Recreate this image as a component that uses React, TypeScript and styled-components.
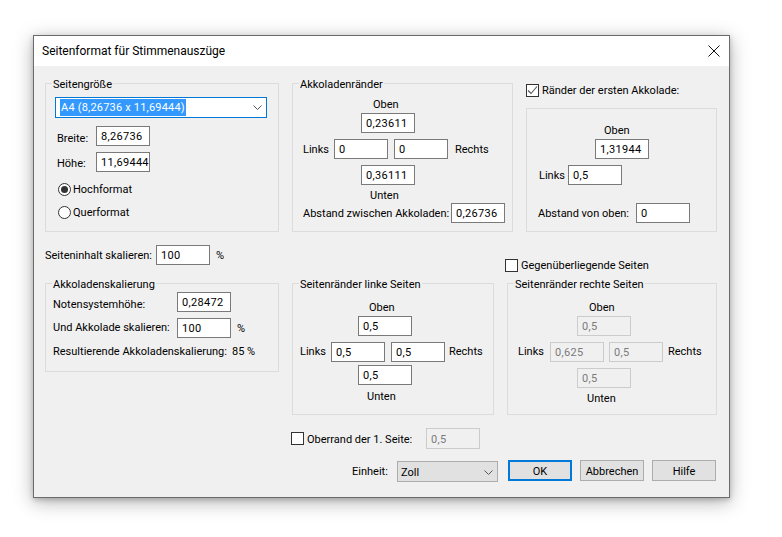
import React from "react";
import styled, { createGlobalStyle } from "styled-components";

const Global = createGlobalStyle`
  html, body { margin: 0; padding: 0; background: #fff; }
  body { font-family: Roboto, "Noto Sans", sans-serif; font-size: 11px; color: #000; }
  #root { height: 537px; overflow: hidden; padding-top: 35px; }
  * { box-sizing: border-box; }
`;

const Win = styled.div`
  margin-left: 33px;
  width: 697px;
  height: 463px;
  border: 1px solid #6b6b6b;
  background: #f0f0f0;
  box-shadow: 0 4px 18px rgba(0, 0, 0, 0.3), 0 2px 5px rgba(0, 0, 0, 0.2);
`;
const TitleBar = styled.div`
  height: 30px;
  background: #fff;
  display: flex;
  align-items: center;
  justify-content: space-between;
  padding: 0 9px 0 8px;
  font-size: 12px;
`;
const Body = styled.div`
  padding: 17px 0 0 11px;
`;
const Columns = styled.div<{ $top?: number }>`
  display: flex;
  gap: 13px;
  margin-top: ${(p) => p.$top ?? 0}px;
`;
const Column = styled.div<{ $w: number }>`
  width: ${(p) => p.$w}px;
  display: flex;
  flex-direction: column;
`;
const GroupBox = styled.div<{ $w?: number; $h: number; $top?: number }>`
  width: ${(p) => (p.$w ? `${p.$w}px` : "auto")};
  height: ${(p) => p.$h}px;
  margin-top: ${(p) => p.$top ?? 0}px;
  border: 1px solid #dcdcdc;
  display: flex;
  flex-direction: column;
  align-items: flex-start;
`;
const Legend = styled.div`
  margin: -8px 0 0 6px;
  height: 16px;
  line-height: 18px;
  padding: 0 1px;
  background: #f0f0f0;
  white-space: nowrap;
`;
const Row = styled.div<{ $left?: number; $top?: number; $h?: number }>`
  display: flex;
  align-items: center;
  height: ${(p) => p.$h ?? 20}px;
  margin-left: ${(p) => p.$left ?? 0}px;
  margin-top: ${(p) => p.$top ?? 0}px;
  white-space: nowrap;
`;
const Label = styled.span<{ $w?: number; $ml?: number; $lh?: number; $dy?: number }>`
  display: inline-block;
  width: ${(p) => (p.$w ? `${p.$w}px` : "auto")};
  margin-left: ${(p) => p.$ml ?? 0}px;
  ${(p) => (p.$lh ? `line-height: ${p.$lh}px;` : "")}
  ${(p) => (p.$dy && p.$dy > 0 ? `margin-top: ${p.$dy * 2}px;` : "")}
  ${(p) => (p.$dy && p.$dy < 0 ? `margin-bottom: ${-p.$dy * 2}px;` : "")}
`;
const Caption = styled.div<{ $left: number; $top?: number }>`
  height: 16px;
  line-height: 18px;
  margin-left: ${(p) => p.$left}px;
  margin-top: ${(p) => p.$top ?? 0}px;
  white-space: nowrap;
`;
const Field = styled.div<{ $off?: boolean; $left?: number; $top?: number; $h?: number }>`
  flex: none;
  width: 54px;
  height: ${(p) => p.$h ?? 20}px;
  line-height: ${(p) => p.$h ?? 20}px;
  margin-left: ${(p) => p.$left ?? 0}px;
  margin-top: ${(p) => p.$top ?? 0}px;
  padding-left: 4px;
  overflow: hidden;
  letter-spacing: 0.3px;
  border: 1px solid ${(p) => (p.$off ? "#cccccc" : "#7a7a7a")};
  background: ${(p) => (p.$off ? "#f0f0f0" : "#fff")};
  color: ${(p) => (p.$off ? "#7a7a7a" : "#000")};
`;
const ComboBlue = styled.div`
  width: 212px;
  height: 21px;
  margin: 5px 0 0 9px;
  border: 1px solid #0078d7;
  background: #fff;
  display: flex;
  align-items: center;
  justify-content: space-between;
  padding: 0 4px 0 4px;
`;
const Selected = styled.span`
  background: #3399ff;
  color: #fff;
  line-height: 17px;
  height: 17px;
  padding: 0 1px;
  letter-spacing: 0.2px;
`;
const RadioDot = styled.span<{ $on?: boolean }>`
  flex: none;
  width: 13px;
  height: 13px;
  border-radius: 50%;
  border: 1px solid #333;
  background: #fff;
  display: flex;
  align-items: center;
  justify-content: center;
  margin-right: 2px;
  &::after {
    content: "";
    display: ${(p) => (p.$on ? "block" : "none")};
    width: 7px;
    height: 7px;
    border-radius: 50%;
    background: #333;
  }
`;
const CheckBox = styled.span`
  flex: none;
  width: 13px;
  height: 13px;
  border: 1px solid #333;
  background: #fff;
  display: flex;
  margin-right: 3px;
`;
const CheckRow = styled.div<{ $left?: number; $top?: number }>`
  display: flex;
  align-items: center;
  height: 13px;
  margin-left: ${(p) => p.$left ?? 0}px;
  margin-top: ${(p) => p.$top ?? 0}px;
  white-space: nowrap;
`;
const Footer = styled.div`
  display: flex;
  align-items: flex-start;
  margin: 11px 0 0 307px;
  height: 21px;
`;
const Combo = styled.div`
  width: 101px;
  height: 21px;
  margin: 1px 10px 0 0;
  border: 1px solid #adadad;
  background: #e1e1e1;
  display: flex;
  align-items: center;
  justify-content: space-between;
  padding: 1px 4px 0 3px;
`;
const Btn = styled.div<{ $primary?: boolean }>`
  width: 64px;
  height: 21px;
  margin-right: 8px;
  padding-top: 1px;
  display: flex;
  align-items: center;
  justify-content: center;
  background: #e1e1e1;
  border: ${(p) => (p.$primary ? "2px solid #0078d7" : "1px solid #adadad")};
`;

const Chevron = () => (
  <svg width="9" height="5" viewBox="0 0 9 5" fill="none" stroke="#555" strokeWidth="1">
    <path d="M0.5 0.5 L4.5 4.5 L8.5 0.5" />
  </svg>
);
const Close = () => (
  <svg width="12" height="12" viewBox="0 0 12 12" fill="none" stroke="#111" strokeWidth="1">
    <path d="M0.5 0.5 L11.5 11.5 M11.5 0.5 L0.5 11.5" />
  </svg>
);
const Tick = () => (
  <svg width="11" height="11" viewBox="0 0 11 11" fill="none" stroke="#555" strokeWidth="1.1">
    <path d="M1 5.5 L4 8.5 L10 1.5" />
  </svg>
);

export default function App() {
  return (
    <>
      <Global />
      <Win>
        <TitleBar>
          <span>Seitenformat für Stimmenauszüge</span>
          <Close />
        </TitleBar>
        <Body>
          <Columns>
            <GroupBox $w={234} $h={149}>
              <Legend>Seitengröße</Legend>
              <ComboBlue>
                <Selected>A4 (8,26736 x 11,69444)</Selected>
                <Chevron />
              </ComboBlue>
              <Row $left={11} $top={8}>
                <Label $w={39} $dy={2}>Breite:</Label>
                <Field>8,26736</Field>
              </Row>
              <Row $left={11} $top={6}>
                <Label $w={39} $dy={1}>Höhe:</Label>
                <Field>11,69444</Field>
              </Row>
              <Row $left={12} $top={7}>
                <RadioDot $on />
                Hochformat
              </Row>
              <Row $left={12} $top={3}>
                <RadioDot />
                Querformat
              </Row>
            </GroupBox>
            <GroupBox $w={221} $h={149}>
              <Legend>Akkoladenränder</Legend>
              <Caption $left={80} $top={4}>Oben</Caption>
              <Field $left={68} $top={1}>0,23611</Field>
              <Row $left={10} $top={6}>
                <Label $w={31}>Links</Label>
                <Field>0</Field>
                <Field $left={6}>0</Field>
                <Label $ml={7}>Rechts</Label>
              </Row>
              <Field $left={68} $top={6}>0,36111</Field>
              <Caption $left={77} $top={2}>Unten</Caption>
              <Row $left={10}>
                <Label $w={148}>Abstand zwischen Akkoladen:</Label>
                <Field>0,26736</Field>
              </Row>
            </GroupBox>
            <Column $w={191}>
              <CheckRow $top={1}>
                <CheckBox>
                  <Tick />
                </CheckBox>
                Ränder der ersten Akkolade:
              </CheckRow>
              <GroupBox $h={124} $top={11}>
                <Caption $left={77} $top={13}>Oben</Caption>
                <Field $left={68} $top={1}>1,31944</Field>
                <Row $left={12} $top={6}>
                  <Label $w={29}>Links</Label>
                  <Field>0,5</Field>
                </Row>
                <Row $left={11} $top={18}>
                  <Label $w={98}>Abstand von oben:</Label>
                  <Field>0</Field>
                </Row>
              </GroupBox>
            </Column>
          </Columns>
          <Columns>
            <Column $w={234}>
              <Row $top={13}>
                <Label $w={111}>Seiteninhalt skalieren:</Label>
                <Field>100</Field>
                <Label $ml={6}>%</Label>
              </Row>
              <GroupBox $h={89} $top={18}>
                <Legend>Akkoladenskalierung</Legend>
                <Row $left={7}>
                  <Label $w={124} $dy={2}>Notensystemhöhe:</Label>
                  <Field>0,28472</Field>
                </Row>
                <Row $left={7} $top={6}>
                  <Label $w={124} $dy={-1}>Und Akkolade skalieren:</Label>
                  <Field>100</Field>
                  <Label $ml={6}>%</Label>
                </Row>
                <Caption $left={7} $top={5}>
                  <Label $w={179}>Resultierende Akkoladenskalierung:</Label>
                  85 %
                </Caption>
              </GroupBox>
            </Column>
            <Column $w={425}>
              <CheckRow $left={213} $top={27}>
                <CheckBox />
                Gegenüberliegende Seiten
              </CheckRow>
              <Columns $top={11}>
                <GroupBox $w={202} $h={132}>
                  <Legend>Seitenränder linke Seiten</Legend>
                  <Caption $left={76} $top={7}>Oben</Caption>
                  <Field $left={65} $top={1}>0,5</Field>
                  <Row $left={7} $top={6}>
                    <Label $w={31} $dy={-1}>Links</Label>
                    <Field>0,5</Field>
                    <Field $left={6}>0,5</Field>
                    <Label $ml={4} $dy={-1}>Rechts</Label>
                  </Row>
                  <Field $left={65} $top={3}>0,5</Field>
                  <Caption $left={74} $top={3}>Unten</Caption>
                </GroupBox>
                <GroupBox $w={210} $h={132}>
                  <Legend>Seitenränder rechte Seiten</Legend>
                  <Caption $left={81} $top={7}>Oben</Caption>
                  <Field $off $left={69} $top={1}>0,5</Field>
                  <Row $left={10} $top={6}>
                    <Label $w={32} $dy={-1}>Links</Label>
                    <Field $off>0,625</Field>
                    <Field $off $left={5}>0,5</Field>
                    <Label $ml={5} $dy={-1}>Rechts</Label>
                  </Row>
                  <Field $off $left={69} $top={6}>0,5</Field>
                  <Caption $left={79} $top={2}>Unten</Caption>
                </GroupBox>
              </Columns>
            </Column>
          </Columns>
          <Row $left={246} $top={13} $h={21}>
            <CheckBox />
            <Label $w={119} $dy={1}>Oberrand der 1. Seite:</Label>
            <Field $off $h={21}>0,5</Field>
          </Row>
          <Footer>
            <Label $w={45} $lh={24}>Einheit:</Label>
            <Combo>
              Zoll
              <Chevron />
            </Combo>
            <Btn $primary>OK</Btn>
            <Btn>Abbrechen</Btn>
            <Btn>Hilfe</Btn>
          </Footer>
        </Body>
      </Win>
    </>
  );
}
